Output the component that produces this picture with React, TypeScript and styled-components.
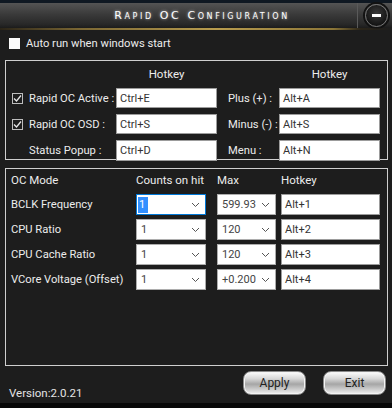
import styled, { createGlobalStyle } from "styled-components"

const Global = createGlobalStyle`
  html, body { margin: 0; padding: 0; background: #0a0a0a; }
  body { font-family: Roboto, "Noto Sans", sans-serif; }
`

const topRows = [
  { checked: true, label: "Rapid OC Active :", key: "Ctrl+E", right: "Plus (+) :", rightKey: "Alt+A" },
  { checked: true, label: "Rapid OC OSD :", key: "Ctrl+S", right: "Minus (-) :", rightKey: "Alt+S" },
  { checked: null, label: "Status Popup :", key: "Ctrl+D", right: "Menu :", rightKey: "Alt+N" },
]

const modes = [
  { name: "BCLK Frequency", count: "1", max: "599.93", key: "Alt+1", focus: true },
  { name: "CPU Ratio", count: "1", max: "120", key: "Alt+2" },
  { name: "CPU Cache Ratio", count: "1", max: "120", key: "Alt+3" },
  { name: "VCore Voltage (Offset)", count: "1", max: "+0.200", key: "Alt+4" },
]

const Chevron = () => (
  <svg width="9" height="6" viewBox="0 0 9 6">
    <path d="M1 1 L4.5 4.5 L8 1" fill="none" stroke="#555" strokeWidth="1" />
  </svg>
)

const App = () => {
  return (
    <>
      <Global />
      <Window>
        <TopStrip />
        <TitleBar>
          <Title>Rapid OC Configuration</Title>
          <Separator />
          <MinButton>
            <Dash />
          </MinButton>
        </TitleBar>
        <GoldLine />

        <AutoRow>
          <WhiteBox />
          <Label>Auto run when windows start</Label>
        </AutoRow>

        <HotkeyPanel>
          <span />
          <span />
          <Head>Hotkey</Head>
          <span />
          <span />
          <Head>Hotkey</Head>
          {topRows.map((r) => (
            <Row key={r.label}>
              {r.checked ? (
                <CheckBox>
                  <svg width="9" height="9" viewBox="0 0 9 9">
                    <path d="M1 4.5 L3.5 7 L8 1.5" fill="none" stroke="#e6e6e6" strokeWidth="1.3" />
                  </svg>
                </CheckBox>
              ) : (
                <span />
              )}
              <Label>{r.label}</Label>
              <Field>{r.key}</Field>
              <span />
              <Label>{r.right}</Label>
              <Field>{r.rightKey}</Field>
            </Row>
          ))}
        </HotkeyPanel>

        <ModePanel>
          <ModeHead>OC Mode</ModeHead>
          <ModeHead>Counts on hit</ModeHead>
          <ModeHead>Max</ModeHead>
          <ModeHead>Hotkey</ModeHead>
          {modes.map((m) => (
            <Row key={m.name}>
              <Label>{m.name}</Label>
              <Select w={70} focus={m.focus}>
                {m.focus ? <Picked>{m.count}</Picked> : <span>{m.count}</span>}
                <Chevron />
              </Select>
              <Select w={59}>
                <span>{m.max}</span>
                <Chevron />
              </Select>
              <Field>{m.key}</Field>
            </Row>
          ))}
        </ModePanel>

        <Footer>
          <Version>Version:2.0.21</Version>
          <Buttons>
            <Btn>Apply</Btn>
            <Btn>Exit</Btn>
          </Buttons>
        </Footer>
        <BottomStrip />
      </Window>
    </>
  )
}

export default App

const Window = styled.div`
  width: 392px;
  height: 408px;
  display: flex;
  flex-direction: column;
  background: #1d1d1d;
  overflow: hidden;
`
const TopStrip = styled.div`
  height: 3px;
  background: #0f1822;
`
const TitleBar = styled.div`
  height: 25px;
  display: flex;
  align-items: center;
  background: linear-gradient(#545454, #3a3a3a 45%, #282828 85%, #1b1b1b);
`
const Title = styled.div`
  flex: 1;
  padding-left: 47px;
  text-align: center;
  font-family: "DejaVu Sans", sans-serif;
  font-variant: small-caps;
  font-size: 11px;
  letter-spacing: 2.6px;
  color: #fff;
  text-shadow: 0 0 3px rgba(255, 255, 255, 0.7);
`
const Separator = styled.div`
  width: 1px;
  align-self: stretch;
  background: #5a5a5a;
`
const MinButton = styled.div`
  width: 21px;
  height: 21px;
  margin: 0 4px 0 7px;
  border-radius: 50%;
  border: 1px solid #777;
  box-shadow: 0 0 0 2px #121212;
  background: radial-gradient(circle at 50% 40%, #3a3a3a, #151515 70%);
  display: flex;
  align-items: center;
  justify-content: center;
`
const Dash = styled.div`
  width: 9px;
  height: 3px;
  background: #fff;
`
const GoldLine = styled.div`
  height: 2px;
  background: linear-gradient(90deg, #2a2418 0%, #7a6633 20%, #b89c4e 55%, #8c7638 85%, #2a2418 92%, transparent);
`
const AutoRow = styled.div`
  display: flex;
  align-items: center;
  gap: 6px;
  height: 11px;
  margin: 8px 0 0 9px;
`
const WhiteBox = styled.div`
  width: 11px;
  height: 11px;
  background: #fafafa;
`
const Label = styled.span`
  color: #ececec;
  font-size: 11.2px;
  white-space: nowrap;
`
const Panel = styled.div`
  margin: 0 4px 0 5px;
  border: 1px solid #cfcfcf;
  display: grid;
  align-items: center;
`
const HotkeyPanel = styled(Panel)`
  margin-top: 11px;
  height: 100px;
  box-sizing: border-box;
  padding: 0 0 0 6px;
  grid-template-columns: 17px 87px 101px 11px 51px 101px;
  grid-template-rows: 21px 20px 20px 21px;
  row-gap: 6px;
  align-content: start;
`
const Row = styled.div`
  display: contents;
`
const Head = styled.span`
  color: #ececec;
  font-size: 11.5px;
  text-align: center;
  align-self: end;
  line-height: 14px;
  padding-bottom: 1px;
`
const CheckBox = styled.div`
  width: 9px;
  height: 9px;
  border: 1px solid #bdbdbd;
  display: flex;
  align-items: center;
  justify-content: center;
`
const Field = styled.div`
  height: 100%;
  box-sizing: border-box;
  background: #fff;
  border: 1px solid #9c9c9c;
  display: flex;
  align-items: center;
  padding-left: 3px;
  color: #333;
  font-size: 11px;
`
const ModePanel = styled(Panel)`
  margin-top: 8px;
  height: 198px;
  box-sizing: border-box;
  padding-left: 5px;
  grid-template-columns: 125px 81px 64px 99px;
  grid-template-rows: 21px repeat(4, 21px);
  row-gap: 4px;
  align-content: start;
`
const ModeHead = styled.span`
  color: #ececec;
  font-size: 11.5px;
  align-self: center;
  margin-top: 1px;
`
const Select = styled.div<{ w: number; focus?: boolean }>`
  width: ${({ w }) => w}px;
  height: 100%;
  box-sizing: border-box;
  background: #fff;
  border: 1px solid ${({ focus }) => (focus ? "#0078d7" : "#adadad")};
  display: flex;
  align-items: center;
  justify-content: space-between;
  padding: 0 5px 0 4px;
  color: #444;
  font-size: 11px;
`
const Picked = styled.span`
  background: #3390ff;
  color: #fff;
  padding: 0 3px 0 1px;
  margin-left: -3px;
  line-height: 16px;
`
const Footer = styled.div`
  flex: 1;
  display: flex;
  justify-content: space-between;
  align-items: flex-start;
  padding: 5px 6px 0 9px;
`
const Version = styled.span`
  color: #e4e4e4;
  font-size: 11.5px;
  margin-top: 15px;
`
const Buttons = styled.div`
  display: flex;
  gap: 17px;
`
const Btn = styled.div`
  width: 63px;
  height: 24px;
  box-sizing: border-box;
  border-radius: 8px;
  border: 1px solid #8a8a8a;
  background: linear-gradient(#fdfdfd, #d8d8d8 30%, #a6a6a6 55%, #cfcfcf 80%, #f2f2f2);
  box-shadow: inset 0 0 0 1px #f4f4f4;
  display: flex;
  align-items: center;
  justify-content: center;
  color: #222;
  font-size: 12px;
`
const BottomStrip = styled.div`
  height: 5px;
  background: #080808;
`
